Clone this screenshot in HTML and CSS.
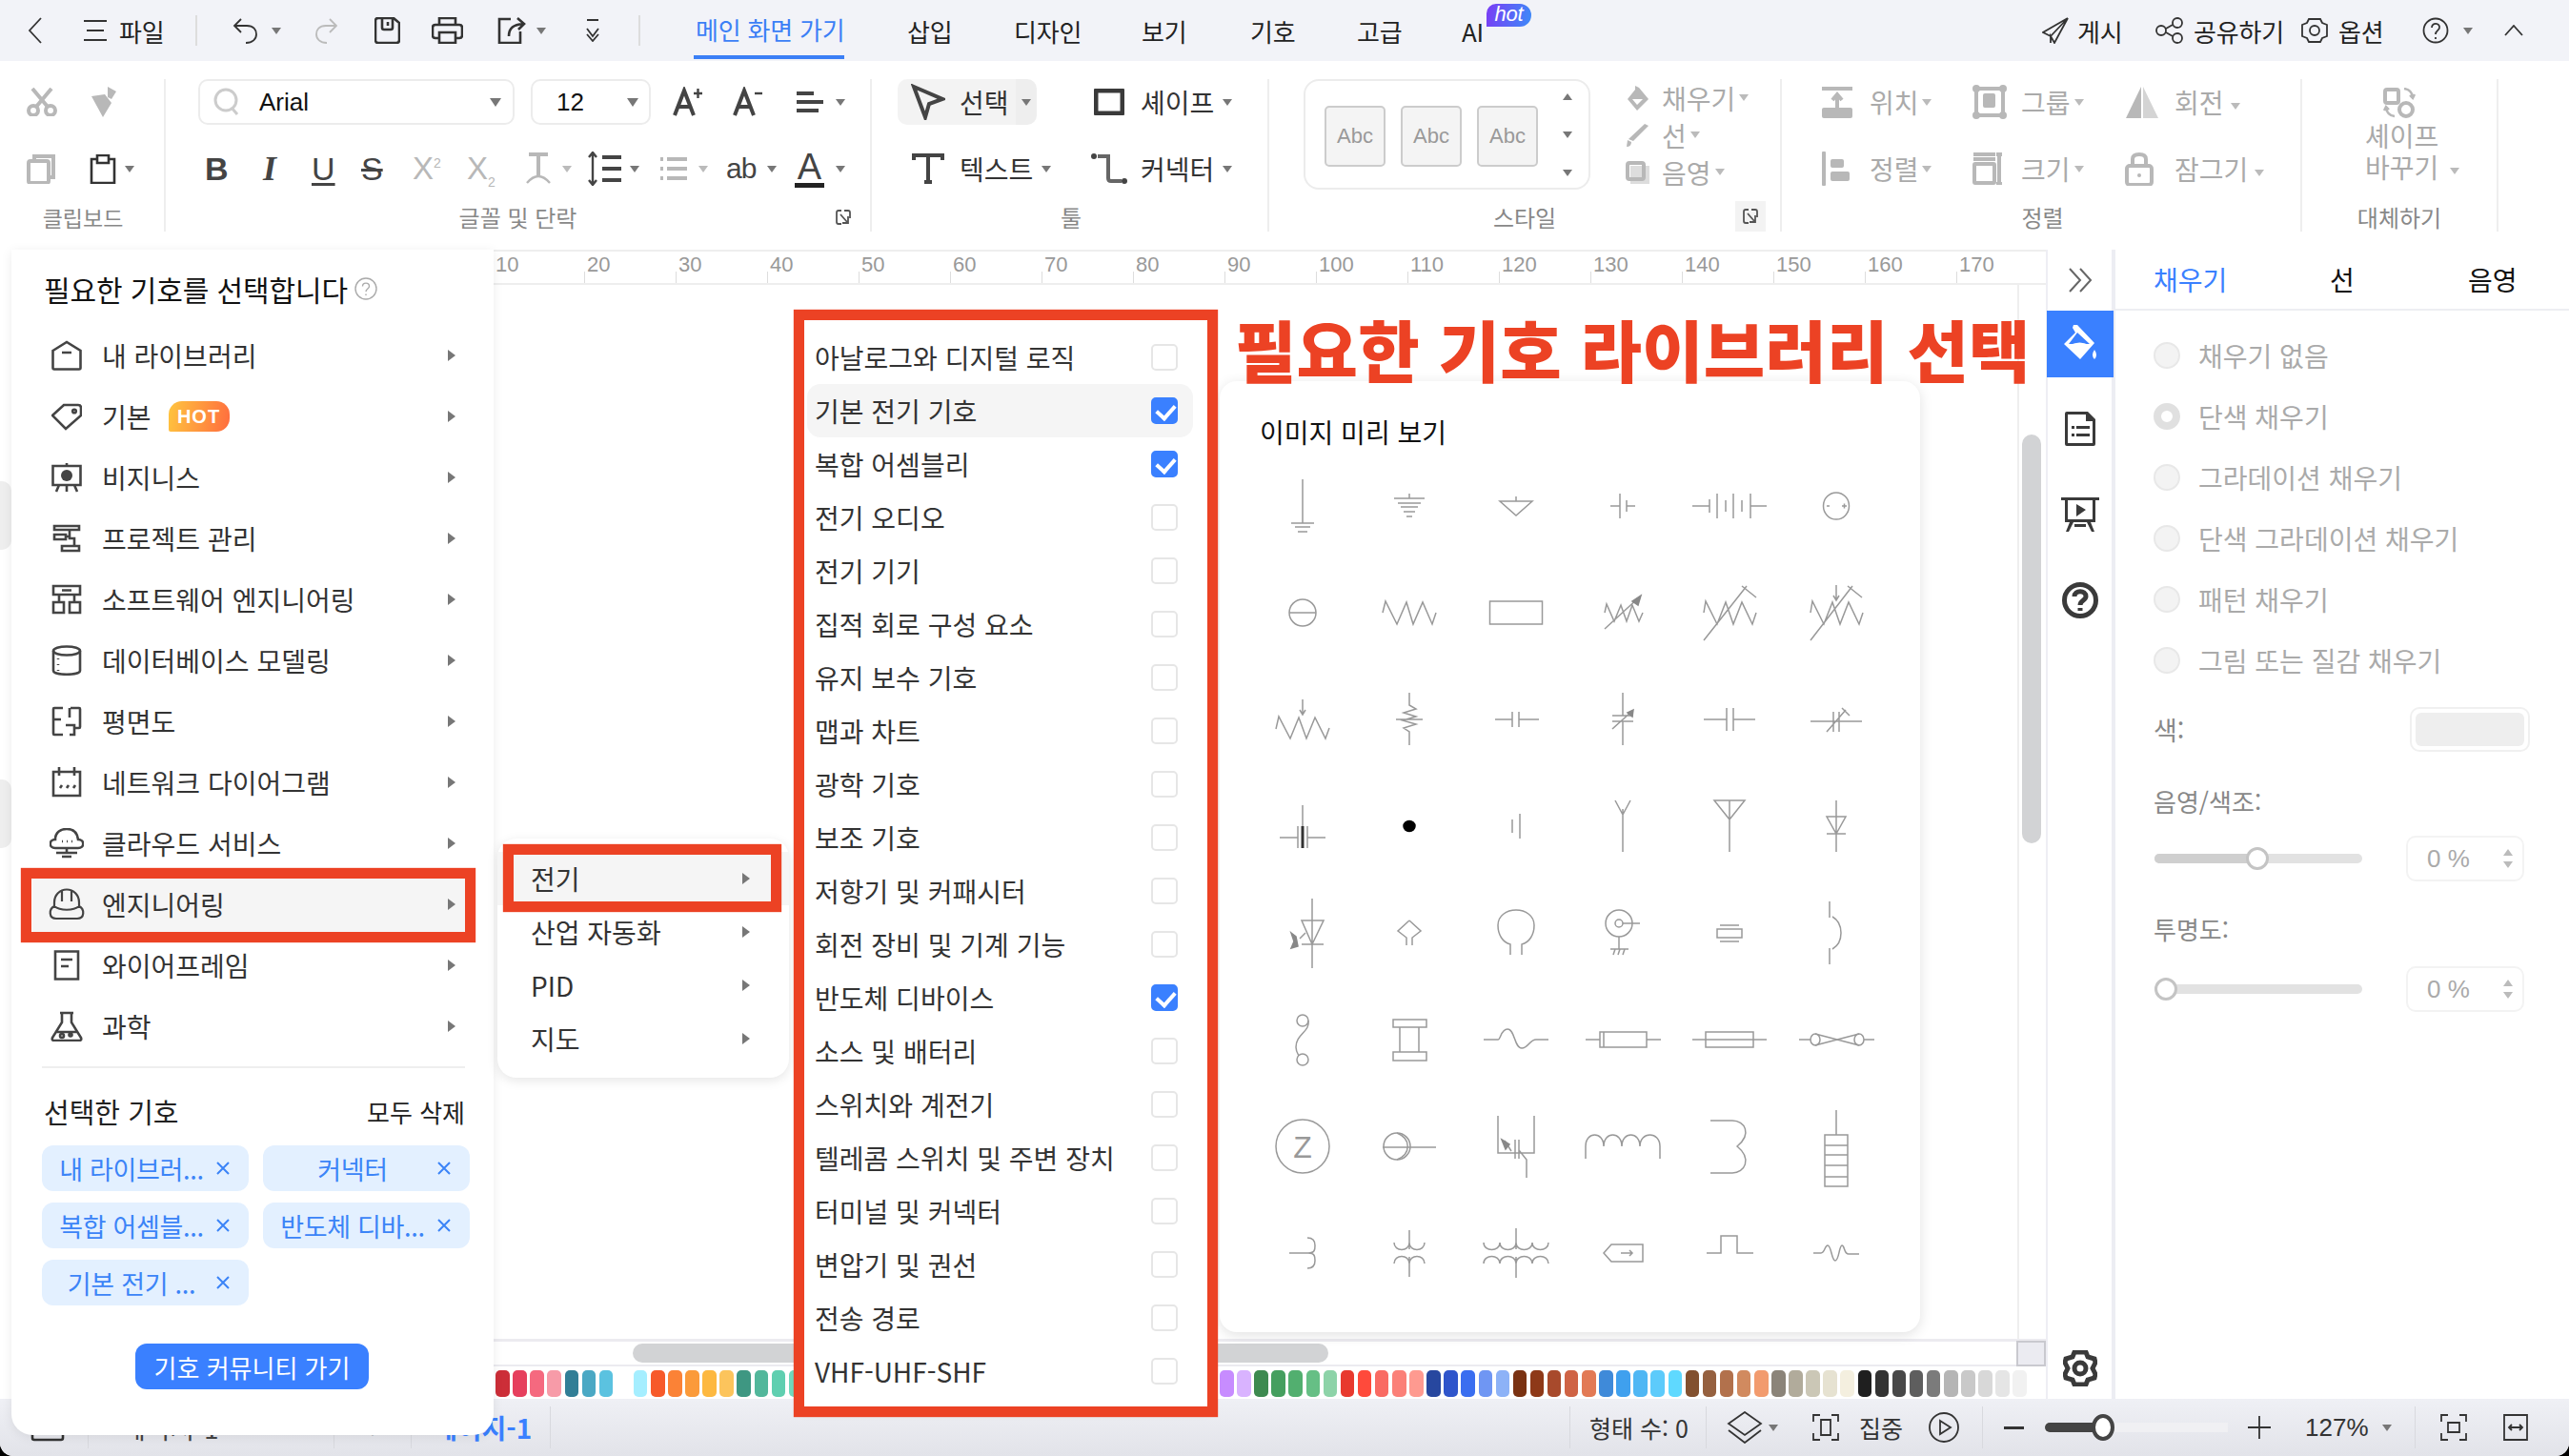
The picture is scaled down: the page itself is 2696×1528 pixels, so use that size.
FILE: index.html
```html
<!DOCTYPE html>
<html lang="ko">
<head>
<meta charset="utf-8">
<title>기호 라이브러리 선택</title>
<link rel="stylesheet" href="styles.css">
</head>
<body>
<div class="app">
  <header class="titlebar">
    <div class="tb-left">
      <svg class="ln" width="16" height="28" viewBox="0 0 16 28"><path d="M14 1L2 14L14 27"/></svg>
      <svg class="ln" width="26" height="24" viewBox="0 0 26 24"><path d="M1 2H25M4 12H22M1 22H25"/></svg>
      <span>파일</span>
      <i class="vdiv"></i>
      <svg class="ln" width="27" height="28" viewBox="0 0 27 28"><path d="M9 2L2 9L9 16M2 9H15C22 9 25 13 25 18C25 23 21 27 14 27"/></svg>
      <i class="caret"></i>
      <svg class="ln off" width="24" height="28" viewBox="0 0 24 28"><path d="M16 2L23 9L16 16M23 9H12C5 9 2 13 2 18C2 23 6 27 13 27"/></svg>
      <svg class="ln bold" width="27" height="28" viewBox="0 0 27 28"><path d="M4 1H20L26 6V24Q26 27 23 27H4Q1 27 1 24V4Q1 1 4 1ZM8 1V11Q8 13 10 13H17Q19 13 19 11V1M14 5V9"/></svg>
      <svg class="ln bold" width="33" height="28" viewBox="0 0 33 28"><path d="M8 8V1H25V8M8 22H4Q1 22 1 19V11Q1 8 4 8H29Q32 8 32 11V19Q32 22 29 22H25M8 16H25V27H8Z"/></svg>
      <svg class="ln bold" width="30" height="28" viewBox="0 0 30 28"><path d="M14 2H2V27H24V15M12 20C12 11 17 8 27 7M21 1L28 7L22 13"/></svg>
      <i class="caret"></i>
      <svg class="ln" width="14" height="24" viewBox="0 0 14 24"><path d="M1 1H13M1 10L7 18L13 10M1 16L7 23L13 16"/></svg>
      <i class="vdiv"></i>
      <a class="tab-on">메인 화면 가기</a>
      <span>삽입</span><span>디자인</span><span>보기</span><span>기호</span><span>고급</span>
      <span class="ai">AI<b class="hot-pill">hot</b></span>
    </div>
    <div class="tb-right">
      <svg class="ln" width="28" height="28" viewBox="0 0 28 28"><path d="M27 1L1 16L9 20L27 1L13 27L9 20V27"/></svg>
      <span>게시</span>
      <svg class="ln" width="30" height="28" viewBox="0 0 30 28"><circle cx="6" cy="14" r="5"/><circle cx="23" cy="6" r="5"/><circle cx="23" cy="22" r="5"/><path d="M11 12L18 8M11 16L18 20"/></svg>
      <span>공유하기</span>
      <svg class="ln" width="30" height="28" viewBox="0 0 30 28"><path d="M9 2H21L23 6L28 8V20L23 22L21 26H9L7 22L2 20V8L7 6Z"/><circle cx="15" cy="14" r="5"/></svg>
      <span>옵션</span>
      <svg class="ln" width="28" height="28" viewBox="0 0 28 28"><circle cx="14" cy="14" r="12.5"/><path d="M10 11C10 5 19 6 18 11C18 14 14 14 14 18M14 21V23"/></svg>
      <i class="caret"></i>
      <svg class="ln" width="20" height="12" viewBox="0 0 20 12"><path d="M1 11L10 1L19 11"/></svg>
    </div>
  </header>

  <section class="ribbon">
    <div class="rb-group g-clip">
      <div class="clip-grid">
        <svg class="dis" width="32" height="30" viewBox="0 0 32 30"><path class="st" d="M6 1L22 20M26 1L10 20"/><circle class="st" cx="7" cy="24" r="5"/><circle class="st" cx="25" cy="24" r="5"/></svg>
        <svg class="dis" width="34" height="34" viewBox="0 0 34 34"><path d="M23 1L32 6L27 14L23 12ZM6 11L20 9L27 18L18 33ZM11 16L20 14L23 19L17 26Z"/></svg>
        <svg class="dis" width="30" height="31" viewBox="0 0 30 31"><path class="st" d="M8 6V2H28V24H24"/><rect class="st" x="2" y="7" width="21" height="23" rx="2"/></svg>
        <span class="withcaret">
          <svg class="ln bold" width="30" height="31" viewBox="0 0 30 31"><path d="M8 5H3V30H27V5H22M9 1H21V9H9Z"/></svg>
          <i class="caret"></i>
        </span>
      </div>
      <div class="rb-label">클립보드</div>
    </div>

    <div class="rb-group g-font">
      <div class="font-row">
        <div class="selectbox fontname">
          <svg class="ln lightq" width="28" height="30" viewBox="0 0 28 30"><circle cx="13" cy="13" r="11"/><path d="M19 21L25 28"/></svg>
          <span>Arial</span><i class="caret"></i>
        </div>
        <div class="selectbox fontsize"><span>12</span><i class="caret"></i></div>
        <svg class="glyph" width="32" height="32" viewBox="0 0 32 32"><path class="st" d="M2 30L12 4L22 30M6 21H18"/><path class="st thin" d="M22 7H31M26.500 2V12"/></svg>
        <svg class="glyph" width="32" height="32" viewBox="0 0 32 32"><path class="st" d="M2 30L12 4L22 30M6 21H18"/><path class="st thin" d="M23 7H31"/></svg>
        <svg class="glyph" width="30" height="24" viewBox="0 0 30 24"><path class="st" d="M1 3H19M1 12H29M1 21H24"/></svg>
        <i class="caret"></i>
      </div>
      <div class="font-row2">
        <b class="fmt b">B</b>
        <b class="fmt i">I</b>
        <b class="fmt u">U</b>
        <b class="fmt s">S</b>
        <span class="fmt off-t">X<sup>2</sup></span>
        <span class="fmt off-t">X<sub>2</sub></span>
        <svg class="dis" width="30" height="34" viewBox="0 0 30 34"><path class="st" d="M5 2H25M15 2V24"/><path class="st thin" d="M3 32Q15 18 27 32"/></svg>
        <i class="caret lt"></i>
        <svg class="glyph spacing" width="36" height="36" viewBox="0 0 36 36"><path class="st thin" d="M5 1V35M1 6L5 1L9 6M1 30L5 35L9 30"/><path class="st" d="M15 6H35M15 18H35M15 30H35"/></svg>
        <i class="caret"></i>
        <svg class="dis" width="30" height="28" viewBox="0 0 30 28"><path class="st" d="M8 4H29M8 14H29M8 24H29M1 4H4M1 14H4M1 24H4"/></svg>
        <i class="caret lt"></i>
        <span class="fmt ab">ab</span>
        <i class="caret"></i>
        <span class="fmt a-col">A</span>
        <i class="caret"></i>
      </div>
      <div class="rb-foot">
        <span></span><div class="rb-label">글꼴 및 단락</div>
        <svg class="corner" width="16" height="16" viewBox="0 0 16 16"><path d="M6 1H3Q1 1 1 3V13Q1 15 3 15H6M9 1H13Q15 1 15 3V9M5 5L12 13M13 7V14H7"/></svg>
      </div>
    </div>

    <div class="rb-group g-tool">
      <div class="tool-grid">
        <div class="selbtn">
          <svg class="ln bold fat" width="36" height="38" viewBox="0 0 36 38"><path d="M3 3L33 16L19 21L15 35Z"/></svg>
          <span>선택</span><i class="caret"></i>
        </div>
        <svg class="ln bold heavy" width="32" height="28" viewBox="0 0 32 28"><rect x="2" y="2" width="28" height="24" rx="1"/></svg>
        <span class="toolname">셰이프<i class="caret"></i></span>
        <span class="texttool">
          <svg class="ln bold fat" width="34" height="32" viewBox="0 0 34 32"><path d="M2 7V2H32V7M17 2V30M13 30H21"/></svg>
          <span class="toolname t2">텍스트<i class="caret"></i></span>
        </span>
        <svg class="ln bold gr" width="40" height="34" viewBox="0 0 40 34"><circle class="dot" cx="4" cy="4" r="3"/><circle class="dot" cx="36" cy="30" r="3"/><path d="M8 4H19V27Q19 30 22 30H33"/></svg>
        <span class="toolname">커넥터<i class="caret"></i></span>
      </div>
      <div class="rb-label">툴</div>
    </div>

    <div class="rb-group g-style">
      <div class="style-top">
        <div class="stylebox">
          <div class="abc">Abc</div><div class="abc dk">Abc</div><div class="abc">Abc</div>
          <div class="style-arrows"><i class="caret up"></i><i class="caret"></i><i class="caret more"></i></div>
        </div>
        <div class="style-list">
          <div class="sl"><svg class="dis" width="26" height="28" viewBox="0 0 26 28"><path d="M10 1L14 3L24 15L12 27L2 15L10 5ZM7 15L12 21L18 15Z"/></svg><span>채우기</span><i class="caret lt"></i></div>
          <div class="sl"><svg class="dis" width="26" height="24" viewBox="0 0 26 24"><path d="M20 0L24 2L8 18L3 16ZM2 17L6 19Q6 24 1 24Z"/></svg><span>선</span><i class="caret lt"></i></div>
          <div class="sl"><svg class="dis" width="26" height="24" viewBox="0 0 26 24"><rect x="5" y="5" width="20" height="19" fill="#ddd"/><rect class="st" x="2" y="2" width="17" height="17" rx="2"/></svg><span>음영</span><i class="caret lt"></i></div>
        </div>
      </div>
      <div class="rb-foot">
        <span></span><div class="rb-label">스타일</div>
        <div class="cornerbtn"><svg class="corner" width="16" height="16" viewBox="0 0 16 16"><path d="M6 1H3Q1 1 1 3V13Q1 15 3 15H6M9 1H13Q15 1 15 3V9M5 5L12 13M13 7V14H7"/></svg></div>
      </div>
    </div>

    <div class="rb-group g-align">
      <div class="align-grid">
        <svg class="dis" width="34" height="33" viewBox="0 0 34 33"><path class="st" d="M1 2H33M17 24V9M12 14L17 8L22 14"/><rect x="1" y="22" width="32" height="11" rx="2"/></svg>
        <span>위치</span><i class="caret lt"></i>
        <svg class="dis" width="36" height="36" viewBox="0 0 36 36"><rect class="st" x="4" y="4" width="28" height="28" rx="3"/><circle cx="4" cy="4" r="4"/><circle cx="32" cy="4" r="4"/><circle cx="4" cy="32" r="4"/><circle cx="32" cy="32" r="4"/><rect x="11" y="9" width="13" height="15" rx="2"/></svg>
        <span>그룹</span><i class="caret lt"></i>
        <svg class="dis" width="36" height="33" viewBox="0 0 36 33"><path d="M17 0V33H1Z"/><path fill="#d4d4d4" d="M19 0V33H35Z"/></svg>
        <span>회전<i class="caret lt inl"></i></span>
        <svg class="dis" width="30" height="36" viewBox="0 0 30 36"><rect x="1" y="0" width="4" height="36" rx="1"/><rect x="10" y="8" width="14" height="9" rx="2"/><rect x="10" y="21" width="20" height="10" rx="2"/></svg>
        <span>정렬</span><i class="caret lt"></i>
        <svg class="dis" width="34" height="34" viewBox="0 0 34 34"><path class="st" d="M1 2H24M1 7H24M28 2V33M25 2H31M25 33H31"/><rect class="st" x="2" y="12" width="21" height="20" rx="1"/></svg>
        <span>크기</span><i class="caret lt"></i>
        <svg class="dis" width="30" height="35" viewBox="0 0 30 35"><path class="st" d="M8 14V7Q8 2 15 2Q22 2 22 7V14"/><rect class="st" x="2" y="14" width="26" height="20" rx="3"/><circle cx="15" cy="24" r="2"/></svg>
        <span>잠그기<i class="caret lt inl"></i></span>
      </div>
      <div class="rb-label">정렬</div>
    </div>

    <div class="rb-group g-swap">
      <svg class="dis" width="34" height="32" viewBox="0 0 34 32"><rect class="st" x="2" y="2" width="14" height="14" rx="2"/><circle class="st" cx="24" cy="23" r="7"/><path class="st thin" d="M22 1Q30 2 31 10M28 8L31 11L33 7M12 30Q4 29 3 21M1 24L3 20L6 23"/></svg>
      <div class="swap-text">셰이프<br>바꾸기<i class="caret lt inl2"></i></div>
      <div class="rb-label swap-label">대체하기</div>
    </div>
  </section>

  <main class="workspace">
    <div class="leftstrip"><i></i><i></i></div>
    <div class="canvascol">
      <div class="ruler">
        <span>10</span><span>20</span><span>30</span><span>40</span><span>50</span><span>60</span><span>70</span><span>80</span><span>90</span><span>100</span><span>110</span><span>120</span><span>130</span><span>140</span><span>150</span><span>160</span><span>170</span>
      </div>
      <div class="canvas">
        <div class="sheet"></div>
        <div class="vtrack"><i></i></div>
      </div>
      <div class="hscroll"><i class="hthumb"></i><i class="hcorner"></i></div>
      <div class="palette" id="palette"></div>
    </div>
    <nav class="sidestrip">
      <div class="si-top"><svg class="ln gr2" width="26" height="26" viewBox="0 0 26 26"><path d="M2 1L13 13L2 25M13 1L24 13L13 25"/></svg></div>
      <div class="si-active"><svg width="36" height="40" viewBox="0 0 36 40"><path fill="#fff" d="M11 0L15 0L33 19L18 36L1 20L13 8L10 3ZM6 20H28L15 8Z" fill-rule="evenodd"/><path fill="#fff" d="M33 26Q37 32 33 36Q29 32 33 26Z"/><path fill="#fff" d="M7 21Q18 16 27 21L18 30Z"/></svg></div>
      <div class="si"><svg width="32" height="36" viewBox="0 0 32 36"><path fill="#3a3a3a" d="M2 0H24L32 8V34Q32 36 30 36H2Q0 36 0 34V2Q0 0 2 0ZM3 3V33H29V10H22V3ZM7 15H10V18H7ZM12 15H26V18H12ZM7 23H10V26H7ZM12 23H26V26H12Z" fill-rule="evenodd"/></svg></div>
      <div class="si"><svg width="40" height="36" viewBox="0 0 40 36"><path fill="#3a3a3a" fill-rule="evenodd" d="M0 0H40V3H36V26H4V3H0ZM7 3V23H33V3ZM16 7L26 13L16 20ZM9 26H13L8 36H5ZM27 26H31L35 36H32Z"/><path fill="#3a3a3a" d="M14 28H26V31H14Z"/></svg></div>
      <div class="si"><svg class="ln bold heavy" width="38" height="38" viewBox="0 0 38 38"><circle cx="19" cy="19" r="16.500"/><path d="M13 15C13 8 25 8 25 15C25 19 19 19 19 24M19 27V30"/></svg></div>
      <div class="si si-gear"><svg class="ln bold heavy" width="36" height="38" viewBox="0 0 36 38"><path d="M12 2H24L26 7L33 9L34 13L31 19L34 25L33 29L26 31L24 36H12L10 31L3 29L2 25L5 19L2 13L3 9L10 7Z"/><circle cx="18" cy="19" r="6"/></svg></div>
    </nav>
    <aside class="props">
      <div class="ptabs"><span class="on">채우기</span><span>선</span><span>음영</span></div>
      <div class="radios">
        <label class="radio"><i></i>채우기 없음</label>
        <label class="radio sel"><i></i>단색 채우기</label>
        <label class="radio"><i></i>그라데이션 채우기</label>
        <label class="radio"><i></i>단색 그라데이션 채우기</label>
        <label class="radio"><i></i>패턴 채우기</label>
        <label class="radio"><i></i>그림 또는 질감 채우기</label>
      </div>
      <div class="colorrow"><span>색:</span><div class="swatchbox"><i></i></div></div>
      <div class="plabel pl1">음영/색조:</div>
      <div class="sliderrow"><div class="track"><i class="fill f1"></i><i class="knob k1"></i></div><div class="spin"><span>0 %</span><span class="spinarr"><i class="caret up"></i><i class="caret"></i></span></div></div>
      <div class="plabel pl2">투명도:</div>
      <div class="sliderrow r2"><div class="track"><i class="knob k2"></i></div><div class="spin"><span>0 %</span><span class="spinarr"><i class="caret up"></i><i class="caret"></i></span></div></div>
    </aside>
  </main>

  <footer class="statusbar">
    <div class="st-left">
      <svg class="ln bold st-pageicon" width="36" height="30" viewBox="0 0 36 30"><rect x="2" y="2" width="32" height="26" rx="2"/></svg>
      <i class="sdiv d1"></i>
      <span class="pg p1">페이지-1</span>
      <i class="sdiv"></i>
      <i class="pgplus">+</i>
      <i class="sdiv"></i>
      <b class="pg p3">페이지-1</b>
      <i class="sdiv"></i>
    </div>
    <div class="st-right">
      <i class="sdiv"></i>
      <span class="shapes">형태 수: 0</span>
      <i class="sdiv"></i>
      <svg class="ln layers" width="38" height="34" viewBox="0 0 38 34"><path d="M19 1L36 13L19 25L2 13ZM2 20L19 33L36 20"/></svg>
      <i class="caret"></i>
      <svg class="ln focus" width="28" height="28" viewBox="0 0 28 28"><path d="M1 8V1H8M20 1H27V8M1 20V27H8M20 27H27V20M9 6H19V22H9Z"/></svg>
      <span class="focustxt">집중</span>
      <svg class="ln playc" width="32" height="32" viewBox="0 0 32 32"><circle cx="16" cy="16" r="15"/><path d="M12 9L23 16L12 23Z"/></svg>
      <i class="sdiv"></i>
      <i class="zminus"></i>
      <div class="ztrack"><i class="zfill"></i><i class="zknob"></i></div>
      <svg class="ln zplus" width="24" height="24" viewBox="0 0 24 24"><path d="M0 12H24M12 0V24"/></svg>
      <span class="zpct">127%</span>
      <i class="caret"></i>
      <i class="sdiv"></i>
      <svg class="ln fit" width="28" height="28" viewBox="0 0 28 28"><path d="M1 8V1H8M20 1H27V8M1 20V27H8M20 27H27V20M8 9H20V19H8Z"/></svg>
      <svg class="ln expand" width="26" height="28" viewBox="0 0 26 28"><path d="M1 1H25V27H1ZM6 14H20M9 11L6 14L9 17M17 11L20 14L17 17"/></svg>
    </div>
  </footer>

  <!-- floating panels -->
  <div class="sympanel">
    <h2 class="sp-title">필요한 기호를 선택합니다<svg class="qmark" width="24" height="24" viewBox="0 0 24 24"><circle cx="12" cy="12" r="11"/><path d="M8.500 9.500C8.500 5 15.500 5 15.500 9.500C15.500 12 12 12 12 15M12 17.500V19"/></svg></h2>
    <ul class="catlist">
      <li><svg class="mi" viewBox="0 0 32 32"><path d="M1.500 11L16 2L30.500 11V29Q30.500 30.500 29 30.500H3Q1.500 30.500 1.500 29ZM11 13H21"/></svg>내 라이브러리<i class="arr"></i></li>
      <li><svg class="mi" viewBox="0 0 32 32"><path d="M1 15L13 4H28Q31 4 31 7V15L15 29Z"/><circle cx="24" cy="10.500" r="1.800"/></svg>기본<b class="hotbadge">HOT</b><i class="arr"></i></li>
      <li><svg class="mi" viewBox="0 0 32 32"><path d="M1.500 4H30.500V24H1.500ZM8 24L5 31M24 24L27 31M16 24V31M16 1V4"/><circle class="pie" cx="16" cy="14" r="6"/></svg>비지니스<i class="arr"></i></li>
      <li><svg class="mi" viewBox="0 0 32 32"><path d="M3 3H29V7H3ZM3 12H15V17H3ZM11 24H29V29H11ZM19 7V16H24V24M15 14H19"/></svg>프로젝트 관리<i class="arr"></i></li>
      <li><svg class="mi" viewBox="0 0 32 32"><path d="M2 2H30V11H2ZM2 19H13V30H2ZM19 19H30V30H19ZM8 11V19M24 11V19M11 6.500H21"/></svg>소프트웨어 엔지니어링<i class="arr"></i></li>
      <li><svg class="mi" viewBox="0 0 32 32"><ellipse cx="16" cy="6" rx="14" ry="4.500"/><path d="M2 6V27C2 32 30 32 30 27V6M7 14V15M7 20V21M7 26V27"/></svg>데이터베이스 모델링<i class="arr"></i></li>
      <li><svg class="mi" viewBox="0 0 32 32"><path d="M12 2H3Q2 2 2 3V29Q2 30 3 30H12M19 30H24V20H15M20 2H29Q30 2 30 3V22Q30 23 29 23H24M2 14H10M19 12V2"/></svg>평면도<i class="arr"></i></li>
      <li><svg class="mi" viewBox="0 0 32 32"><path d="M2 5H30V30H2ZM8 0V9M24 0V9M9 22L11 19M16 22L18 19M23 22L25 19"/></svg>네트워크 다이어그램<i class="arr"></i></li>
      <li><svg class="mi wide" viewBox="0 0 36 32"><path d="M9 21H6C-1 21 -1 12 6 12C6 4 12 1 18 1C24 1 29 4 30 12C37 12 37 21 30 21H9M18 21V26M7 26H29M13 30H23M13 14H14M18 14H19M23 14H24"/></svg>클라우드 서비스<i class="arr"></i></li>
      <li class="hl"><svg class="mi hat" viewBox="0 0 40 34"><path d="M7 21V15C7 7 13 1.500 20 1.500C27 1.500 33 7 33 15V21M15 3V14M25 3V14M7 19C1 22 1 32 9 32H31C39 32 39 22 33 19C27 24 13 24 7 19Z"/></svg>엔지니어링<i class="arr"></i></li>
      <li><svg class="mi" viewBox="0 0 32 32"><path d="M4 1.500H28V30.500H4ZM10 10H22M10 17H18"/></svg>와이어프레임<i class="arr"></i></li>
      <li><svg class="mi wide" viewBox="0 0 36 32"><path d="M11 2H25M13 2V12L3 28Q2 31 5 31H31Q34 31 33 28L23 12V2M7 22H29"/><circle cx="13" cy="26" r="2"/><circle cx="22" cy="25" r="1.500"/></svg>과학<i class="arr"></i></li>
    </ul>
    <div class="sel-head"><span class="sel-t">선택한 기호</span><span class="sel-c">모두 삭제</span></div>
    <div class="chips">
      <div class="chip"><span>내 라이브러...</span><svg class="x" viewBox="0 0 16 16"><path d="M2 2L14 14M14 2L2 14"/></svg></div>
      <div class="chip"><span>커넥터</span><svg class="x" viewBox="0 0 16 16"><path d="M2 2L14 14M14 2L2 14"/></svg></div>
      <div class="chip"><span>복합 어셈블...</span><svg class="x" viewBox="0 0 16 16"><path d="M2 2L14 14M14 2L2 14"/></svg></div>
      <div class="chip"><span>반도체 디바...</span><svg class="x" viewBox="0 0 16 16"><path d="M2 2L14 14M14 2L2 14"/></svg></div>
      <div class="chip"><span>기본 전기 ...</span><svg class="x" viewBox="0 0 16 16"><path d="M2 2L14 14M14 2L2 14"/></svg></div>
    </div>
    <button class="commbtn">기호 커뮤니티 가기</button>
  </div>

  <div class="submenu">
    <div class="sub hl">전기<i class="arr"></i></div>
    <div class="sub">산업 자동화<i class="arr"></i></div>
    <div class="sub">PID<i class="arr"></i></div>
    <div class="sub">지도<i class="arr"></i></div>
  </div>

  <div class="libpanel">
    <div class="lib">아날로그와 디지털 로직<i class="cb"></i></div>
    <div class="lib hl">기본 전기 기호<i class="cb on"></i></div>
    <div class="lib">복합 어셈블리<i class="cb on"></i></div>
    <div class="lib">전기 오디오<i class="cb"></i></div>
    <div class="lib">전기 기기<i class="cb"></i></div>
    <div class="lib">집적 회로 구성 요소<i class="cb"></i></div>
    <div class="lib">유지 보수 기호<i class="cb"></i></div>
    <div class="lib">맵과 차트<i class="cb"></i></div>
    <div class="lib">광학 기호<i class="cb"></i></div>
    <div class="lib">보조 기호<i class="cb"></i></div>
    <div class="lib">저항기 및 커패시터<i class="cb"></i></div>
    <div class="lib">회전 장비 및 기계 기능<i class="cb"></i></div>
    <div class="lib">반도체 디바이스<i class="cb on"></i></div>
    <div class="lib">소스 및 배터리<i class="cb"></i></div>
    <div class="lib">스위치와 계전기<i class="cb"></i></div>
    <div class="lib">텔레콤 스위치 및 주변 장치<i class="cb"></i></div>
    <div class="lib">터미널 및 커넥터<i class="cb"></i></div>
    <div class="lib">변압기 및 권선<i class="cb"></i></div>
    <div class="lib">전송 경로<i class="cb"></i></div>
    <div class="lib">VHF-UHF-SHF<i class="cb"></i></div>
  </div>

  <div class="preview">
    <h3 class="pv-title">이미지 미리 보기</h3>
    <div class="symgrid">
      <svg class="sym" viewBox="-56 -56 112 112"><path d="M0-28V18M-12 18H12M-8 22H8M-5 27H5"/></svg>
      <svg class="sym" viewBox="-56 -56 112 112"><path d="M0-13V-8M-16-8H16M-12-3H12M-9 1H9M-6 6H6M-3 11H3"/></svg>
      <svg class="sym" viewBox="-56 -56 112 112"><path d="M0-10V-5M-17-5H17L0 10Z"/></svg>
      <svg class="sym" viewBox="-56 -56 112 112"><path d="M-13 0H-3M-3-13V13M4-6V6M4 0H13"/></svg>
      <svg class="sym" viewBox="-56 -56 112 112"><path d="M-39 0H-21M-21-7V7M-13-13V13M-4-6V6M4-13V13M13-6V6M22-13V13M22 0H39"/></svg>
      <svg class="sym" viewBox="-56 -56 112 112"><ellipse rx="13.500" ry="14"/><path d="M-10 0H-7M6 0H11M8.500-2.500V2.500"/></svg>

      <svg class="sym" viewBox="-56 -56 112 112"><ellipse rx="14" ry="14"/><path d="M-14 0H14"/></svg>
      <svg class="sym" viewBox="-56 -56 112 112"><path d="M-28 0L-25-12L-13 12L-3-11L4 12L14-11L24 12L28 0"/></svg>
      <svg class="sym" viewBox="-56 -56 112 112"><rect x="-27.500" y="-12" width="55" height="24"/></svg>
      <svg class="sym" viewBox="-56 -56 112 112"><path d="M-19 0L-17-9L-9 9L-2-8L4 9L10-8L17 9L21 0M-19 17L17-16"/><path class="solid" d="M19-18L16-8L10-12Z"/></svg>
      <svg class="sym" viewBox="-56 -56 112 112"><path d="M-27 0L-25-12L-13 12L-4-11L4 12L13-11L24 12L28 0M-27 29L18-28M13-28L28-16"/></svg>
      <svg class="sym" viewBox="-56 -56 112 112"><path d="M-27 0L-25-12L-13 12L-4-11L4 12L13-11L24 12L28 0M-27 29L17-28M12-28L27-16M0-29V-13M-3-18L0-13L3-18"/></svg>

      <svg class="sym" viewBox="-56 -56 112 112"><path d="M-28 10L-25-3L-13 20L-4-2L4 20L13-2L24 20L28 9M0-21V-5M-3-10L0-5L3-10"/></svg>
      <svg class="sym" viewBox="-56 -56 112 112"><path d="M0-28V-15L7-11L-6-7L7-3L-7 1L7 5L-6 9L0 13V27M-14 0H14"/></svg>
      <svg class="sym" viewBox="-56 -56 112 112"><path d="M-22 0H-4M-4-8V8M3-8V8M3 0H24"/></svg>
      <svg class="sym" viewBox="-56 -56 112 112"><path d="M0-28V-4M0 2V27M-11-4H11M-11 2H11M-11 10L9-8"/><path class="solid" d="M11-10L10-3L5-7Z"/></svg>
      <svg class="sym" viewBox="-56 -56 112 112"><path d="M-27 0H-3M-3-12V12M4-12V12M4 0H27"/></svg>
      <svg class="sym" viewBox="-56 -56 112 112"><path d="M-27 2H27M-3-8V13M3-8V13M-10 13L10-10M6-12L14-4"/></svg>

      <svg class="sym" viewBox="-56 -56 112 112"><path d="M0-22V23M-24 12H-5M5 12H24M-5 0V23M5 0V23"/><path class="heavyl" d="M0 0V23"/></svg>
      <svg class="sym" viewBox="-56 -56 112 112"><ellipse class="black" rx="6" ry="5.500"/></svg>
      <svg class="sym" viewBox="-56 -56 112 112"><path d="M-4-7V7M4-13V13"/></svg>
      <svg class="sym" viewBox="-56 -56 112 112"><path d="M0-18V27M-8-27L0-12L8-27"/></svg>
      <svg class="sym" viewBox="-56 -56 112 112"><path d="M-16-27H16L0-7ZM0-27V27"/></svg>
      <svg class="sym" viewBox="-56 -56 112 112"><path d="M0-27V27M-10-10H10L0 8ZM-10 8H10"/></svg>

      <svg class="sym" viewBox="-56 -56 112 112"><path d="M10-36V37M-1-13H22L10 12ZM-1 12H22M-3 6L3 0"/><path class="solid" d="M-12 0L-7 4L-5 14L-12 16L-9 9Z"/></svg>
      <svg class="sym" viewBox="-56 -56 112 112"><path d="M0-13L12-2L3 5V13M0-13L-12-2L-3 5V13"/></svg>
      <svg class="sym" viewBox="-56 -56 112 112"><path d="M-6 23V12C-14 10-19 2-19-8C-19-18-10-24 0-24C10-24 19-18 19-8C19 2 14 10 6 12V23"/></svg>
      <svg class="sym" viewBox="-56 -56 112 112"><ellipse cx="-4" cy="-10" rx="14" ry="14"/><circle cx="-4" cy="-10" r="4"/><path d="M0-10H18M-4 4V17M-13 17H6M-10 23L-8 17M-5 23L-3 17M0 23L2 17"/></svg>
      <svg class="sym" viewBox="-56 -56 112 112"><path d="M-10-8H10M-10 9H10"/><rect x="-13" y="-4" width="26" height="9"/></svg>
      <svg class="sym" viewBox="-56 -56 112 112"><path d="M-7-33V-16M-7 16V33M-4-17C8-10 8 10-4 17"/></svg>

      <svg class="sym" viewBox="-56 -56 112 112"><ellipse cx="0" cy="-20" rx="6" ry="6"/><ellipse cx="0" cy="21" rx="6" ry="6"/><path d="M6-20C8-8-7-6-7 8C-7 12-5 15-4 17"/></svg>
      <svg class="sym" viewBox="-56 -56 112 112"><rect x="-17" y="-21" width="35" height="8"/><rect x="-17" y="13" width="35" height="9"/><path d="M-10-13V13M10-13V13"/></svg>
      <svg class="sym" viewBox="-56 -56 112 112"><path d="M-34 0H-19C-16 0-16-11-9-11C-1-11-2 9 6 9C13 9 14 0 21 0H34"/></svg>
      <svg class="sym" viewBox="-56 -56 112 112"><path d="M-39 0H-24M25 0H40M-20-8V8"/><rect x="-24" y="-8" width="49" height="16"/></svg>
      <svg class="sym" viewBox="-56 -56 112 112"><path d="M-39 0H39"/><rect x="-25" y="-8" width="50" height="16"/></svg>
      <svg class="sym" viewBox="-56 -56 112 112"><ellipse cx="-22" cy="0" rx="5" ry="6"/><ellipse cx="24" cy="0" rx="5" ry="6"/><path d="M-39 0H-27M29 0H40M-22-6L24 6M-22 6L24-6"/></svg>

      <svg class="sym" viewBox="-56 -56 112 112"><ellipse rx="28" ry="28"/><text class="symz" x="0" y="12">Z</text></svg>
      <svg class="sym" viewBox="-56 -56 112 112"><ellipse cx="-13" cy="0" rx="14" ry="14"/><path d="M-28 1H28M-13-14C2-8 2 8-13 14"/></svg>
      <svg class="sym" viewBox="-56 -56 112 112"><path d="M-19-32V7H19V-32M-1-7V13M3-7V13M3 4L11 14V33M-5 5L-12-6"/><path class="solid" d="M-15-7L-7-2L-11 3Z"/></svg>
      <svg class="sym" viewBox="-56 -56 112 112"><path d="M-39 13V0C-39-16-20-16-20 0C-20-16-1-16-1 0C-1-16 18-16 18 0C18-16 39-16 39 0V13"/></svg>
      <svg class="sym" viewBox="-56 -56 112 112"><path d="M-20-27H3C16-27 24-13 8 0C24 13 16 28 3 28H-20"/></svg>
      <svg class="sym" viewBox="-56 -56 112 112"><path d="M0-38V-12M-12-1H12M-12 9H12M-12 20H12M-12 32H12"/><rect x="-12" y="-12" width="24" height="54"/></svg>

      <svg class="sym" viewBox="-56 -56 112 112"><path d="M-14 0H6C13 0 13-4 13-8C13-13 10-16 5-16M6 0C13 0 13 4 13 8C13 13 10 16 5 16"/></svg>
      <svg class="sym" viewBox="-56 -56 112 112"><path d="M0-24V-4M0 4V25M-16-11C-16-1 0-1 0-11C0-1 16-1 16-11M-16 11C-16 1 0 1 0 11C0 1 16 1 16 11"/></svg>
      <svg class="sym" viewBox="-56 -56 112 112"><path d="M0-26V-4M0 4V26M-34-11C-34-1-17-1-17-11C-17-1 0-1 0-11C0-1 17-1 17-11C17-1 34-1 34-11M-34 11C-34 1-17 1-17 11C-17 1 0 1 0 11C0 1 17 1 17 11C17 1 34 1 34 11"/></svg>
      <svg class="sym" viewBox="-56 -56 112 112"><path d="M-20 0L-12-9H21V9H-12ZM-2 0H10M7-3L10 0L7 3"/></svg>
      <svg class="sym" viewBox="-56 -56 112 112"><path d="M-24 0H-9V-18H8V0H25"/></svg>
      <svg class="sym" viewBox="-56 -56 112 112"><path d="M-24 0H-16C-12 0-12-8-9-8C-5-8-5 8-1 8C3 8 3-8 6-8C9-8 8 1 13 1H24"/></svg>
    </div>
  </div>

  <i class="redbox rb-eng"></i>
  <i class="redbox rb-sub"></i>
  <i class="redbox rb-lib"></i>
  <div class="redtitle">필요한 기호 라이브러리 선택</div>
</div>
<script src="palette.js"></script>
</body>
</html>
```

FILE: palette.js
```js
var colors = ["#c8272f","#cc2e38","#e63f5d","#f5697f","#f79ba8","#317e96","#4aa8c4","#5bc2e0","#ffffff","#a5eeff","#f75a2a","#fb8236","#fb9a3a","#fdb840","#fcc45c","#3e9782","#52b79b","#5fcfb0",
"#6fd8bb","#4e7fd0","#3b6fe0","#5a8df0","#7aa6f5","#9cc0fa","#b8d4fc","#d8e8fe","#5e3bb0","#6f4bc8","#8a62e0","#a57eea","#c09bf2","#d4b9f7","#e6d5fb","#7a2a8a","#913aa0","#a84fb5","#bd68c8","#d088d8","#e0a8e5","#efc8f0","#8f4fe0","#9f62e8",
"#b98ef0","#c78cff","#d9b3ff","#3d8a50","#459f5f","#52af6f","#66bf85","#8dd3a8","#e8392e","#ff4a3b","#f96b63","#fb8078","#fe9a90","#27479f","#2f55cb","#3a6ef0","#6f96f3","#8db2f7","#7a3212","#8e3918","#a84a2c","#cf6345","#e27a55","#3f8ad9","#3fa0ee","#4fb7f4","#5dcbfb","#5fd9ff","#82502f","#95603f","#b2714c","#d18a5f","#f29b6e","#8b8479","#b1ab9b","#cbc7b6","#e6e2d1","#f4efdf","#1f1f1f","#333333","#484848","#5e5e5e","#7b7b7b","#b5b5b5","#c9c9c9","#d8d8d8","#e5e5e5","#f1f1f1","#ffffff"];
var host = document.getElementById("palette");
colors.forEach(function (c) {
  var s = document.createElement("i");
  s.style.background = c;
  host.appendChild(s);
});
```

FILE: styles.css
```css
* { box-sizing: border-box; }
html, body { margin: 0; padding: 0; background: #000; }
body { width: 2696px; height: 1528px; overflow: hidden; font-family: "Noto Sans CJK KR", "Noto Sans", sans-serif; color: #222; }
i { font-style: normal; display: block; }
.app { position: relative; width: 2696px; height: 1528px; display: flex; flex-direction: column; background: #fff; border-radius: 0 0 14px 14px; overflow: hidden; }
.ln { fill: none; stroke: #333; stroke-width: 1.8; display: block; }
.ln.bold { stroke-width: 2.6; }
.ln.heavy { stroke-width: 5; stroke: #3a3a3a; }
.ln.fat { stroke-width: 4; stroke: #444; }
.ln.off { stroke: #bbb; }
.ln.gr { stroke: #666; stroke-width: 4; }
.ln.gr2 { stroke: #666; stroke-width: 2; }
.ln .dot { fill: #444; stroke: none; }
.ln.lightq { stroke: #ccc; stroke-width: 3; }
.caret { width: 0; height: 0; border-left: 5px solid transparent; border-right: 5px solid transparent; border-top: 7px solid #777; }
.caret.lt { border-top-color: #bbb; }
.caret.up { border-top: 0; border-bottom: 7px solid #777; }

/* title bar */
.titlebar { height: 64px; flex: none; background: #f2f3f8; display: flex; font-size: 26px; letter-spacing: -.2px; color: #222; }
.tb-left { display: grid; grid-template-columns: 58px 38px 80px 39px 41px 45px 63px 60px 69px 41px 52px 55px 60px 222px 112px 134px 114px 112px 110px auto; align-items: center; padding-left: 29px; }
.tb-right { margin-left: auto; width: 553px; display: grid; grid-template-columns: 37px 82px 40px 112px 40px 88px 43px 43px auto; align-items: center; }
.vdiv { width: 2px; height: 32px; background: #ddd; }
.tab-on { color: #3b7ff6; height: 62px; line-height: 62px; width: 158px; padding-left: 2px; border-bottom: 4px solid #3b7ff6; align-self: start; margin-left: -2px; white-space: nowrap; }
.ai { position: relative; }
.hot-pill { position: absolute; left: 26px; top: -10px; width: 47px; height: 24px; border-radius: 10px 12px 12px 0; background: linear-gradient(100deg, #7a3cf5, #3d8bf8); color: #fff; font: italic 400 22px/22px "Liberation Sans", sans-serif; text-align: center; }

/* ribbon */
.ribbon { height: 198px; flex: none; background: #fff; display: flex; padding-top: 19px; color: #333; font-size: 28px; }
.rb-group { height: 160px; border-right: 2px solid #eeeeee; display: flex; flex-direction: column; position: relative; }
.rb-label { height: 30px; line-height: 30px; font-size: 24px; color: #888; text-align: center; white-space: nowrap; }
.rb-foot { margin-top: auto; display: grid; grid-template-columns: 1fr auto 1fr; align-items: center; }
.dis { fill: #b8b8b8; display: block; }
.dis .st { fill: none; stroke: #b8b8b8; stroke-width: 4; }
.glyph { fill: none; display: block; }
.glyph .st { stroke: #444; stroke-width: 4; fill: none; }
.glyph.spacing { margin-left: 3px; }
.st.thin { stroke-width: 2.4; }
.g-clip { width: 174px; padding-left: 28px; }
.clip-grid { display: grid; grid-template-columns: 62px auto; grid-template-rows: 48px 48px; row-gap: 22px; align-items: center; }
.withcaret { display: flex; align-items: center; gap: 8px; margin-left: 3px; }
.g-clip .rb-label { margin: auto 0 0 -28px; width: 174px; font-size: 23px; }

.g-font { width: 741px; padding-left: 34px; }
.font-row { display: grid; grid-template-columns: 349px 149px 63px 66px 42px auto; align-items: center; height: 48px; }
.selectbox { height: 48px; border: 2px solid #ececec; border-radius: 10px; display: flex; align-items: center; background: #fff; color: #111; }
.selectbox .caret { margin-left: auto; border-top-width: 9px; border-left-width: 6px; border-right-width: 6px; }
.fontname { width: 332px; padding: 0 12px 0 14px; font: 26px "Liberation Sans", sans-serif; gap: 20px; }
.fontsize { width: 126px; padding: 0 11px 0 25px; font: 26px "Liberation Sans", sans-serif; }
.font-row2 { margin-top: 22px; height: 48px; padding-left: 7px; display: grid; grid-template-columns: 58px 54px 52px 54px 57px 60px 40px 24px 47px 31px 41px 29px 43px 29px 43px auto; align-items: center; }
.fmt { font: 700 34px/40px "Liberation Sans", sans-serif; color: #444; display: block; }
.fmt.i { font-family: "Liberation Serif", serif; font-style: italic; font-size: 36px; padding-left: 3px; }
.fmt.u { text-decoration: underline; font-weight: 400; text-underline-offset: 3px; }
.fmt.s { text-decoration: line-through; font-weight: 400; }
.fmt.off-t { color: #b8b8b8; font-weight: 400; font-size: 33px; }
.fmt.off-t sup, .fmt.off-t sub { font-size: 14px; line-height: 0; }
.fmt.ab { font-weight: 400; font-size: 30px; letter-spacing: -1px; }
.fmt.a-col { font-weight: 400; font-size: 38px; line-height: 34px; border-bottom: 5px solid #222; width: 31px; text-align: center; }
.corner { fill: none; stroke: #555; stroke-width: 1.8; display: block; }
.g-font .rb-foot { margin-left: -34px; }
.g-font svg.corner { justify-self: end; margin-right: 20px; }

.g-tool { width: 417px; padding-left: 27px; }
.tool-grid { display: grid; grid-template-columns: 206px 49px auto; grid-template-rows: 48px 48px; row-gap: 22px; align-items: center; }
.selbtn { width: 146px; height: 48px; background: linear-gradient(90deg, #f3f3f3 0 124px, #eee 124px); border-radius: 10px; display: flex; align-items: center; padding-left: 14px; gap: 15px; white-space: nowrap; }
.selbtn .caret { margin-left: -2px; }
.toolname { display: flex; align-items: center; gap: 9px; white-space: nowrap; }
.texttool { display: flex; align-items: center; gap: 16px; padding-left: 15px; }
.toolname.t2 { gap: 9px; }
.texttool + svg { margin-left: -4px; }
.g-tool .rb-label { margin-top: auto; padding-right: 24px; }

.g-style { width: 538px; padding-left: 36px; }
.style-top { display: flex; }
.stylebox { width: 301px; height: 116px; border: 2px solid #ececec; border-radius: 16px; display: flex; align-items: center; padding: 4px 0 0 20px; gap: 16px; }
.abc { width: 64px; height: 64px; background: #f4f4f4; border: 2px solid #ccc; border-radius: 5px; font: 22px/60px "Liberation Sans", sans-serif; color: #999; text-align: center; }
.style-arrows { display: flex; flex-direction: column; gap: 33px; margin-left: 10px; margin-top: -4px; }
.caret.more { box-shadow: 0 -6px 0 -4px #777; }
.style-list { margin-left: 37px; display: flex; flex-direction: column; color: #aaa; }
.sl { height: 39px; display: flex; align-items: center; gap: 12px; }
.sl .caret { margin-left: -8px; }
.g-style .rb-foot { margin-left: -36px; }
.cornerbtn { width: 32px; height: 32px; background: #f3f3f3; display: flex; align-items: center; justify-content: center; justify-self: end; margin-right: 15px; margin-top: -3px; }

.g-align { width: 546px; padding-left: 41px; color: #aaa; }
.align-grid { display: grid; grid-template-columns: 51px 55px 53px 51px 56px 53px 52px auto; grid-template-rows: 48px 48px; row-gap: 22px; align-items: center; }
.caret.inl { display: inline-block; vertical-align: middle; margin-left: 7px; }
.g-align .rb-label { margin-top: auto; padding-right: 38px; }

.g-swap { width: 206px; align-items: center; color: #aaa; padding-top: 9px; }
.swap-text { line-height: 33px; padding-top: 2px; width: 80px; white-space: nowrap; margin-left: 8px; }
.caret.inl2 { display: inline-block; vertical-align: middle; margin-left: 12px; }
.swap-label { margin-top: auto; }

/* workspace */
.workspace { flex: 1; display: flex; min-height: 0; background: #fff; }
.leftstrip { width: 12px; flex: none; padding-top: 243px; background: #fff; }
.leftstrip i { height: 72px; background: #eeeeee; border-radius: 0 10px 10px 0; margin-bottom: 241px; }
.canvascol { width: 2135px; flex: none; display: flex; flex-direction: column; }
.ruler { height: 37px; flex: none; display: flex; padding-left: 505px; border-top: 2px solid #eeeeee; border-bottom: 2px solid #eeeeee; color: #999; font: 22px/28px "Liberation Sans", sans-serif; }
.ruler span { width: 96px; flex: none; padding-left: 3px; background: linear-gradient(#ddd, #ddd) left bottom / 1px 12px no-repeat; }
.canvas { flex: 1; display: flex; min-height: 0; }
.sheet { flex: 1; background: #fff; }
.vtrack { width: 30px; flex: none; border-left: 2px solid #eee; padding: 157px 0 0 3px; }
.vtrack i { width: 20px; height: 429px; background: #d2d3d5; border-radius: 10px; }
.hscroll { height: 29px; flex: none; display: flex; align-items: center; padding-left: 652px; border-top: 3px solid #ecebf0; border-bottom: 2px solid #ecebf0; }
.hthumb { width: 730px; height: 20px; background: #d2d3d5; border-radius: 10px; }
.hcorner { width: 31px; height: 27px; margin-left: auto; background: #ebebf1; border: 2px solid #c9c9cf; }
.palette { height: 34px; flex: none; display: flex; justify-content: flex-end; padding: 4px 2px 2px 0; gap: 3.6px; overflow: hidden; }
.palette i { width: 14.5px; height: 28px; flex: none; border-radius: 5px; }

.sidestrip { width: 73px; flex: none; border-left: 2px solid #eeeef4; border-right: 4px solid #ecedf3; display: flex; flex-direction: column; align-items: center; }
.si-top { height: 64px; flex: none; display: flex; align-items: center; justify-content: center; }
.si-active { width: 70px; height: 70px; flex: none; background: #3a80ff; display: flex; align-items: center; justify-content: center; }
.si { height: 90px; flex: none; display: flex; align-items: center; justify-content: center; }
.si-active + .si { margin-top: 9px; }
.si-gear { margin-top: auto; height: 64px; }

.props { flex: 1; min-width: 0; font-size: 28px; color: #aaa; }
.ptabs { height: 64px; border-bottom: 2px solid #edeef2; display: grid; grid-template-columns: 185px 145px auto; align-items: center; padding-left: 40px; color: #111; font-size: 28px; }
.ptabs .on { color: #3a80ff; }
.radios { margin-top: 15px; }
.radio { height: 64px; display: flex; align-items: center; padding-left: 40px; gap: 19px; }
.radio i { width: 28px; height: 28px; border-radius: 50%; background: #f3f3f3; border: 2px solid #e8e8e8; flex: none; }
.radio.sel i { background: #fff; border: 8px solid #e0e0e0; }
.colorrow { height: 47px; margin-top: 17px; display: flex; align-items: center; justify-content: space-between; padding: 0 41px 0 40px; color: #888; font-size: 27px; }
.swatchbox { width: 126px; height: 47px; border: 2px solid #f0f0f0; border-radius: 10px; padding: 4px; }
.swatchbox i { height: 100%; border-radius: 6px; background: #eeeeee; }
.plabel { padding-left: 40px; height: 40px; line-height: 40px; color: #888; font-size: 26px; }
.pl1 { margin-top: 32px; }
.pl2 { margin-top: 30px; }
.sliderrow { margin-top: 16px; height: 48px; display: flex; align-items: center; padding-left: 41px; }
.sliderrow.r2 { margin-top: 19px; }
.track { width: 218px; height: 10px; background: #e2e2e2; border-radius: 5px; position: relative; }
.fill { height: 10px; border-radius: 5px; background: #cfcfcf; }
.fill.f1 { width: 108px; }
.knob { position: absolute; top: -7px; width: 24px; height: 24px; border-radius: 50%; background: #fff; border: 3px solid #c4c4c4; }
.knob.k1 { left: 96px; }
.knob.k2 { left: 0; }
.spin { width: 124px; height: 48px; margin-left: 46px; border-radius: 10px; background: #fff; border: 2px solid #f3f3f3; display: flex; align-items: center; color: #aaa; font: 26px "Liberation Sans", sans-serif; padding-left: 20px; }
.spinarr { margin-left: auto; margin-right: 10px; display: flex; flex-direction: column; gap: 6px; }
.spinarr .caret { border-top-color: #bbb; border-bottom-color: #bbb; }

/* status bar */
.statusbar { height: 60px; flex: none; background: linear-gradient(#eff0f5, #e2e3e9); display: flex; align-items: center; font-size: 25px; color: #333; }
.st-left { display: flex; align-items: center; height: 100%; }
.st-pageicon { margin-left: 32px; }
.sdiv { width: 1px; height: 44px; background: #d8d9de; flex: none; }
.sdiv.d1 { margin-left: 24px; }
.pg { white-space: nowrap; font-size: 28px; }
.pg.p1 { padding-left: 34px; color: #444; width: 257px; }
.pgplus { width: 80px; color: #444; text-align: center; }
.pg.p3 { padding-left: 22px; color: #3a80ff; font-weight: 700; width: 145px; }
.st-right { margin-left: auto; display: flex; align-items: center; height: 100%; width: 1049px; }
.shapes { margin-left: 20px; width: 122px; white-space: nowrap; }
.layers { margin-left: 21px; }
.st-right .layers + .caret { margin-left: 6px; }
.focus { margin-left: 36px; }
.focustxt { margin-left: 21px; width: 48px; white-space: nowrap; }
.playc { margin-left: 25px; margin-right: 24px; }
.zminus { width: 21px; height: 3px; background: #333; margin-left: 22px; }
.ztrack { position: relative; width: 192px; height: 10px; background: #f0f0f3; margin-left: 22px; }
.zfill { width: 60px; height: 10px; background: #444; border-radius: 5px; }
.zknob { position: absolute; left: 49px; top: -9px; width: 24px; height: 28px; border-radius: 50%; background: #fff; border: 4px solid #444; }
.zplus { margin-left: 21px; }
.zpct { margin-left: 36px; width: 76px; font: 26px "Liberation Sans", sans-serif; }
.zpct + .caret { margin-right: 24px; margin-left: 5px; }
.fit { margin-left: 26px; }
.expand { margin-left: 38px; }

/* symbol panel */
.sympanel { position: absolute; left: 12px; top: 262px; width: 506px; height: 1244px; background: #fff; border-radius: 0 0 22px 22px; box-shadow: 0 2px 12px rgba(0,0,0,.08); padding: 21px 0 0 34px; }
.sp-title { margin: 0; font-size: 30px; font-weight: 400; line-height: 40px; color: #111; display: flex; align-items: center; gap: 7px; white-space: nowrap; letter-spacing: -.1px; }
.qmark { fill: none; stroke: #aaa; stroke-width: 1.4; flex: none; }
.catlist { list-style: none; margin: 18px 0 0 -12px; padding: 0; width: 456px; font-size: 28px; color: #333; }
.catlist li { height: 64px; display: flex; align-items: center; padding-left: 20px; position: relative; white-space: nowrap; }
.catlist li.hl { background: #f5f5f5; }
.mi { width: 32px; height: 32px; fill: none; stroke: #444; stroke-width: 2.6; margin-right: 21px; flex: none; }
.mi.wide { width: 36px; margin: 0 19px 0 -2px; }
.mi.hat { width: 40px; height: 34px; margin: 0 17px 0 -4px; stroke-width: 2.2; }
.mi .pie { fill: #444; stroke: none; }
.arr { width: 0; height: 0; border-top: 6.5px solid transparent; border-bottom: 6.5px solid transparent; border-left: 8px solid #777; margin-left: auto; }
.catlist .arr { margin-right: 12px; }
.hotbadge { margin-left: 18px; width: 64px; height: 32px; border-radius: 14px 14px 14px 2px; background: linear-gradient(100deg, #ffc53f, #ff6c3e); color: #fff; font: 700 20px/32px "Liberation Sans", sans-serif; text-align: center; letter-spacing: 1px; }
.sel-head { margin-top: 10px; border-top: 2px solid #eeeeee; width: 442px; margin-left: -2px; padding: 25px 0 0 2px; display: flex; justify-content: space-between; align-items: center; box-sizing: content-box; height: 40px; }
.sel-t { font-size: 29px; color: #222; }
.sel-c { font-size: 26px; color: #222; }
.chips { margin: 16px 0 0 -2px; display: grid; grid-template-columns: 217px 217px; column-gap: 15px; row-gap: 12px; grid-auto-rows: 48px; }
.chip { background: #e3f0ff; border-radius: 12px; color: #3b84f7; font-size: 27px; display: flex; align-items: center; padding-left: 15px; }
.chip span { width: 158px; text-align: center; white-space: nowrap; letter-spacing: -.3px; }
.x { width: 16px; height: 16px; margin-left: 9px; fill: none; stroke: #3b84f7; stroke-width: 2; flex: none; }
.commbtn { display: block; margin: 40px 0 0 96px; width: 245px; height: 48px; border: 0; border-radius: 12px; background: #3a80ff; color: #fff; font: 26px "Noto Sans CJK KR", sans-serif; padding: 0; }

.submenu { position: absolute; left: 522px; top: 880px; width: 306px; height: 251px; background: #fff; border-radius: 20px; box-shadow: 0 3px 12px rgba(0,0,0,.1); padding-top: 14px; font-size: 28px; color: #333; }
.sub { height: 56px; display: flex; align-items: center; padding: 0 41px 0 35px; }
.sub.hl { background: #f5f5f5; }

.libpanel { position: absolute; left: 840px; top: 330px; width: 430px; height: 1150px; background: #fff; padding: 17px 0 0 7px; font-size: 28px; color: #333; box-shadow: 0 2px 12px rgba(0,0,0,.06); }
.lib { width: 405px; height: 56px; display: flex; align-items: center; justify-content: space-between; padding: 0 16px 0 8px; border-radius: 14px; white-space: nowrap; }
.lib.hl { background: #f5f5f5; }
.cb { width: 28px; height: 28px; border: 2px solid #e6e6e6; border-radius: 5px; background: #fff; flex: none; position: relative; }
.cb.on { background: #3a80ff; border-color: #3a80ff; }
.cb.on::after { content: ""; position: absolute; left: 7px; top: 2px; width: 9px; height: 15px; border: solid #fff; border-width: 0 4px 4px 0; transform: rotate(42deg); }

.preview { position: absolute; left: 1280px; top: 400px; width: 735px; height: 998px; background: #fff; border-radius: 18px; box-shadow: 0 3px 14px rgba(0,0,0,.12); padding: 33px 0 0 31px; }
.pv-title { margin: 0 0 2px 11px; font-size: 28px; font-weight: 400; line-height: 40px; color: #111; }
.symgrid { display: grid; grid-template-columns: repeat(6, 112px); grid-auto-rows: 112px; }
.sym { width: 112px; height: 112px; fill: none; stroke: #999; stroke-width: 1.5; }
.sym .solid { fill: #888; stroke: #888; }
.sym .black { fill: #000; stroke: #000; }
.sym .heavyl { stroke: #333; stroke-width: 3; }
.symz { font: 32px "Liberation Sans", sans-serif; fill: #999; stroke: none; text-anchor: middle; }

.redbox { position: absolute; border: 11px solid #ec4224; box-shadow: 0 0 1px #ec4224; pointer-events: none; }
.rb-eng { left: 22px; top: 911px; width: 477px; height: 78px; }
.rb-sub { left: 528px; top: 886px; width: 292px; height: 71px; }
.rb-lib { left: 833px; top: 325px; width: 445px; height: 1162px; }
.redtitle { position: absolute; left: 1296px; top: 318px; font-size: 70px; font-weight: 900; line-height: 96px; letter-spacing: .2px; color: #ec4224; white-space: nowrap; }
```
